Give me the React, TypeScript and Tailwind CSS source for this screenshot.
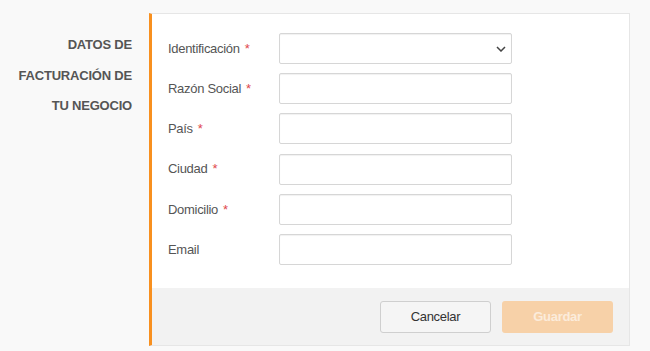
import React from 'react';

const fields = [
  { label: 'Identificación', required: true, select: true },
  { label: 'Razón Social', required: true },
  { label: 'País', required: true },
  { label: 'Ciudad', required: true },
  { label: 'Domicilio', required: true },
  { label: 'Email', required: false },
];

export default function App() {
  return (
    <div className="min-h-screen bg-[#f9f9f9] pt-[13px] flex font-[family-name:'Liberation_Sans',Arial,sans-serif]">
      {/* Section title */}
      <div className="w-[149px] pr-[17px] pt-[17px] text-right">
        <h2 className="text-[13px] tracking-[-0.2px] leading-[30.5px] font-bold uppercase text-[#555]">
          Datos de
          <br />
          Facturación de
          <br />
          tu negocio
        </h2>
      </div>

      {/* Form card */}
      <div className="w-[481px] h-[333px] bg-white border border-[#e6e6e6] border-l-[3px] border-l-[#f8901f] flex flex-col">
        <div className="flex-1 pl-[16px] pt-[19px] flex flex-col gap-[9.2px]">
          {fields.map((f) => (
            <div key={f.label} className="flex items-center h-[31px]">
              <label className="w-[111px] text-[13px] tracking-[-0.3px] text-[#555]">
                {f.label}
                {f.required && <span className="text-[#e0474c] ml-[5px]">*</span>}
              </label>
              <div className="relative w-[233px] h-[31px] border border-[#d6d6d6] rounded-[2px] bg-white shadow-[inset_0_1px_1px_rgba(0,0,0,0.06)]">
                {f.select && (
                  <svg className="absolute right-[5px] top-[12px]" width="10" height="6" viewBox="0 0 10 6" fill="none">
                    <path d="M1 1l4 4 4-4" stroke="#444" strokeWidth="1.5" />
                  </svg>
                )}
              </div>
            </div>
          ))}
        </div>

        <div className="h-[57px] bg-[#f2f2f2] flex items-center justify-end gap-[11px] pr-[16px]">
          <button className="w-[111px] h-[32px] rounded-[3px] border border-[#cfcfcf] bg-[#f5f5f5] text-[13px] tracking-[-0.3px] text-[#333]">
            Cancelar
          </button>
          <button className="w-[111px] h-[32px] rounded-[3px] bg-[#f7d1a8] text-[13px] tracking-[-0.3px] font-bold text-white/60">
            Guardar
          </button>
        </div>
      </div>
    </div>
  );
}
